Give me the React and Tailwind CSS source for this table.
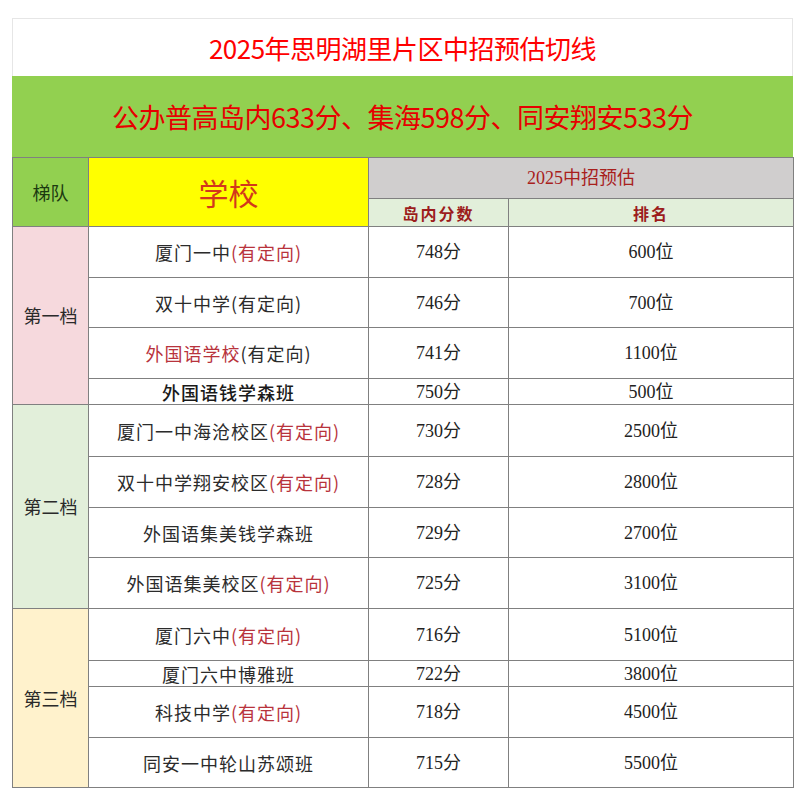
import React from 'react';

const groups = [
  {
    label: '第一档',
    bg: 'bg-[#f6d9dd]',
    rows: [
      { name: '厦门一中', tag: true, score: '748分', rank: '600位', h: 'h-[51px]' },
      { name: '双十中学', tag: true, tagDark: true, score: '746分', rank: '700位', h: 'h-[50px]' },
      { name: '外国语学校', nameRed: true, tag: true, tagDark: true, score: '741分', rank: '1100位', h: 'h-[51px]' },
      { name: '外国语钱学森班', bold: true, score: '750分', rank: '500位', h: 'h-[26px]' },
    ],
  },
  {
    label: '第二档',
    bg: 'bg-[#e2efda]',
    rows: [
      { name: '厦门一中海沧校区', tag: true, score: '730分', rank: '2500位', h: 'h-[52px]' },
      { name: '双十中学翔安校区', tag: true, score: '728分', rank: '2800位', h: 'h-[51px]' },
      { name: '外国语集美钱学森班', score: '729分', rank: '2700位', h: 'h-[50px]' },
      { name: '外国语集美校区', tag: true, score: '725分', rank: '3100位', h: 'h-[51px]' },
    ],
  },
  {
    label: '第三档',
    bg: 'bg-[#fff2cc]',
    rows: [
      { name: '厦门六中', tag: true, score: '716分', rank: '5100位', h: 'h-[52px]' },
      { name: '厦门六中博雅班', score: '722分', rank: '3800位', h: 'h-[26px]' },
      { name: '科技中学', tag: true, score: '718分', rank: '4500位', h: 'h-[51px]' },
      { name: '同安一中轮山苏颂班', score: '715分', rank: '5500位', h: 'h-[50px]' },
    ],
  },
];

const cjk = "font-['Noto_Sans_CJK_SC',sans-serif]";
const num = "font-['Liberation_Serif','Noto_Sans_CJK_SC',serif]";
const cell = 'border border-[#808080] p-0 text-center align-middle';

export default function App() {
  return (
    <div className="bg-white w-[805px] h-[800px] pt-[18px] pl-[12px]">
      <div className="w-[781px]">
        {/* title */}
        <div className="h-[58px] border border-b-0 border-[#e6e6e6] flex items-center justify-center">
          <span className={`${cjk} text-[26px] leading-none text-[#ff0000] tracking-[-0.5px]`}>
            2025年思明湖里片区中招预估切线
          </span>
        </div>
        <div className="h-[81px] bg-[#92d050] flex items-center justify-center">
          <span className={`${cjk} text-[27px] leading-none text-[#e60000] tracking-[-0.5px]`}>
            公办普高岛内633分、集海598分、同安翔安533分
          </span>
        </div>

        {/* table */}
        <table className="w-[781px] border-collapse table-fixed">
          <colgroup>
            <col className="w-[76px]" />
            <col className="w-[280px]" />
            <col className="w-[140px]" />
            <col className="w-[285px]" />
          </colgroup>
          <thead>
            <tr className="h-[41px]">
              <td rowSpan={2} className={`${cell} bg-[#92d050] ${cjk} text-[18px] text-[#1c3a10]`}>
                梯队
              </td>
              <td rowSpan={2} className={`${cell} bg-[#ffff00] ${cjk} text-[30px] text-[#d2381c]`}>
                学校
              </td>
              <td colSpan={2} className={`${cell} bg-[#d0cece] ${num} text-[18px] text-[#a8201c]`}>
                2025中招预估
              </td>
            </tr>
            <tr className="h-[28px]">
              <td className={`${cell} bg-[#e2efda] ${cjk} text-[16px] font-bold text-[#9c1c1c] tracking-[2px]`}>
                岛内分数
              </td>
              <td className={`${cell} bg-[#e2efda] ${cjk} text-[16px] font-bold text-[#9c1c1c] tracking-[2px]`}>
                排名
              </td>
            </tr>
          </thead>
          <tbody>
            {groups.map((g) =>
              g.rows.map((r, i) => (
                <tr key={g.label + i} className={r.h}>
                  {i === 0 && (
                    <td rowSpan={g.rows.length} className={`${cell} ${g.bg} ${cjk} text-[18px] text-[#2a2a2a]`}>
                      {g.label}
                    </td>
                  )}
                  <td className={`${cell} ${cjk} text-[18px] leading-none tracking-[1px]`}>
                    <span className={r.nameRed ? 'text-[#b8333c]' : r.bold ? 'text-[#1a1a1a] font-medium' : 'text-[#2b2b2b]'}>
                      {r.name}
                    </span>
                    {r.tag && (
                      <span className={r.tagDark ? 'text-[#2b2b2b]' : 'text-[#b8333c]'}>(有定向)</span>
                    )}
                  </td>
                  <td className={`${cell} ${num} text-[18px] leading-none text-[#222]`}>{r.score}</td>
                  <td className={`${cell} ${num} text-[18px] leading-none text-[#222]`}>{r.rank}</td>
                </tr>
              ))
            )}
          </tbody>
        </table>
      </div>
    </div>
  );
}
